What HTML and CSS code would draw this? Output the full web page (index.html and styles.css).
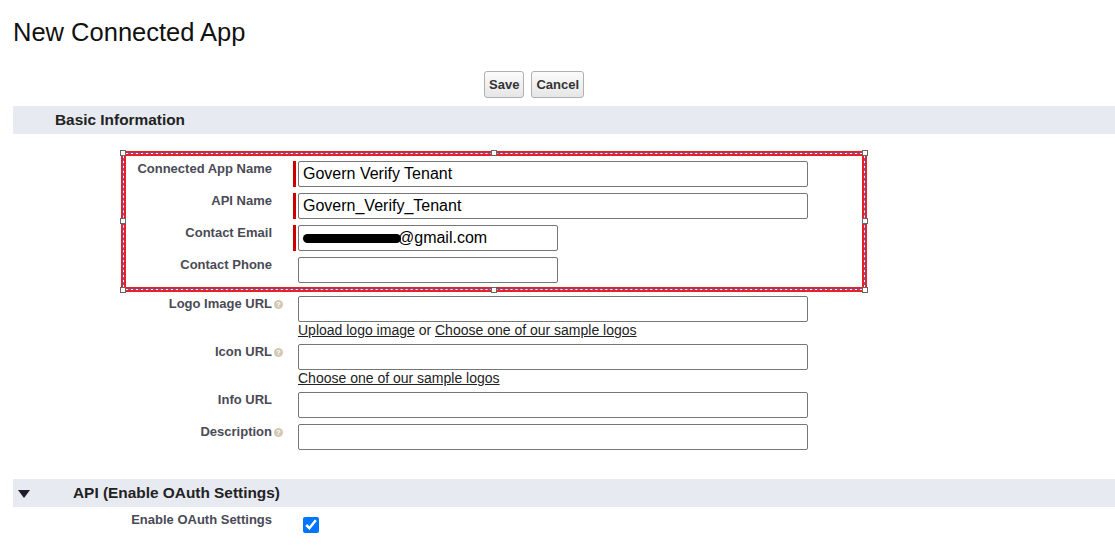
FILE: index.html
```html
<!DOCTYPE html>
<html lang="en">

<head>
    <meta charset="UTF-8">
    <meta name="viewport" content="width=device-width, initial-scale=1.0">
    <title>New Connected App</title>
    <link rel="stylesheet" href="styles.css">
</head>

<body>
    <main class="page">
        <h1 class="title">New Connected App</h1>

        <div class="buttons">
            <button class="btn">Save</button>
            <button class="btn">Cancel</button>
        </div>

        <div class="section-bar">
            <h2>Basic Information</h2>
        </div>

        <!-- highlighted block -->
        <div class="highlight">
            <span class="handle tl"></span>
            <span class="handle tm"></span>
            <span class="handle tr"></span>
            <span class="handle ml"></span>
            <span class="handle mr"></span>
            <span class="handle bl"></span>
            <span class="handle bm"></span>
            <span class="handle br"></span>

            <div class="row">
                <label class="label">Connected App Name</label>
                <span class="hint"></span>
                <div class="field req"><input class="input wide" type="text" value="Govern Verify Tenant"></div>
            </div>
            <div class="row">
                <label class="label">API Name</label>
                <span class="hint"></span>
                <div class="field req"><input class="input wide" type="text" value="Govern_Verify_Tenant"></div>
            </div>
            <div class="row">
                <label class="label">Contact Email</label>
                <span class="hint"></span>
                <div class="field req email">
                    <input class="input short email-input" type="text" value="@gmail.com">
                    <span class="redact"></span>
                </div>
            </div>
            <div class="row">
                <label class="label">Contact Phone</label>
                <span class="hint"></span>
                <div class="field"><input class="input short" type="text"></div>
            </div>
        </div>

        <div class="row">
            <label class="label">Logo Image URL</label>
            <span class="hint"><span class="help">?</span></span>
            <div class="field">
                <input class="input wide" type="text">
                <div class="links"><a href="#">Upload logo image</a> or <a href="#">Choose one of our sample logos</a></div>
            </div>
        </div>
        <div class="row">
            <label class="label">Icon URL</label>
            <span class="hint"><span class="help">?</span></span>
            <div class="field">
                <input class="input wide" type="text">
                <div class="links"><a href="#">Choose one of our sample logos</a></div>
            </div>
        </div>
        <div class="row">
            <label class="label">Info URL</label>
            <span class="hint"></span>
            <div class="field"><input class="input wide" type="text"></div>
        </div>
        <div class="row">
            <label class="label">Description</label>
            <span class="hint"><span class="help">?</span></span>
            <div class="field"><input class="input wide" type="text"></div>
        </div>

        <div class="section-bar api">
            <span class="twisty"></span>
            <h2>API (Enable OAuth Settings)</h2>
        </div>

        <div class="row check-row">
            <label class="label">Enable OAuth Settings</label>
            <span class="hint"></span>
            <div class="field"><input class="check" type="checkbox" checked></div>
        </div>
    </main>
</body>

</html>
```

FILE: styles.css
```css
* {
    margin: 0;
    padding: 0;
    box-sizing: border-box;
}

body {
    background: #fff;
    font-family: "Liberation Sans", Arial, sans-serif;
    color: #222;
}

.page {
    padding: 18px 0 0 13px;
}

.title {
    font-size: 25.5px;
    font-weight: normal;
    line-height: 29px;
    color: #111;
}

/* save / cancel */

.buttons {
    display: flex;
    gap: 7px;
    margin: 24px 0 8px 471px;
}

.btn {
    height: 27px;
    padding: 0 4px;
    font-family: inherit;
    font-size: 13px;
    font-weight: bold;
    color: #333;
    background: linear-gradient(#fbfbfb, #e6e6e6);
    border: 1px solid #b0b0b0;
    border-radius: 3px;
}

/* section headers */

.section-bar {
    display: flex;
    align-items: center;
    height: 28px;
    background: #e8eaf2;
    padding-left: 42px;
}

.section-bar h2 {
    font-size: 15.4px;
    font-weight: bold;
    line-height: 28px;
    color: #222;
}

.section-bar.api {
    margin-top: 29px;
    padding-left: 5px;
}

.twisty {
    width: 0;
    height: 0;
    margin: 1px 43px 0 0;
    border-left: 6.5px solid transparent;
    border-right: 6.5px solid transparent;
    border-top: 8px solid #1e1e2a;
}

/* form rows */

.row {
    display: flex;
    align-items: flex-start;
    margin-bottom: 6px;
}

.label {
    width: 259px;
    text-align: right;
    font-size: 13px;
    font-weight: bold;
    line-height: 15px;
    color: #4a4a56;
}

.hint {
    width: 21px;
    padding: 4px 0 0 2px;
}

.help {
    display: block;
    width: 9px;
    height: 9px;
    border-radius: 50%;
    background: #d3c8b4;
    color: #fff;
    font-size: 7px;
    font-weight: bold;
    line-height: 9px;
    text-align: center;
}

.field {
    padding-left: 5px;
}

.field.req {
    border-left: 3px solid #c00;
    padding-left: 2px;
    height: 26px;
}

.input {
    display: block;
    height: 26px;
    padding: 0 4px;
    font-family: inherit;
    font-size: 16px;
    color: #000;
    border: 1px solid #767676;
    border-radius: 2px;
    background: #fff;
}

.input.wide {
    width: 510px;
}

.input.short {
    width: 260px;
}

.links {
    font-size: 14px;
    line-height: 16px;
    color: #222;
}

.links a {
    color: #222;
}

/* email with blacked out name */

.field.email {
    position: relative;
}

.email-input {
    padding-left: 99px;
}

.redact {
    position: absolute;
    left: 7px;
    top: 9px;
    width: 98px;
    height: 9px;
    border-radius: 5px;
    background: #000;
}

/* red selection frame */

.highlight {
    position: relative;
    width: 742px;
    margin: 19px 0 6px 110px;
    padding-top: 7px;
    border: 1px dashed #3c6fd6;
    background: #fff;
    box-shadow: 0 0 0 2px #e8202a, inset 0 0 0 2px #e8202a;
}

.highlight .label {
    width: 148px;
}

.handle {
    position: absolute;
    width: 6px;
    height: 6px;
    background: #fff;
    border: 1px solid #666;
}

.handle.tl { left: -4px; top: -4px; }
.handle.tm { left: 367px; top: -4px; }
.handle.tr { right: -4px; top: -4px; }
.handle.ml { left: -4px; top: 64px; }
.handle.mr { right: -4px; top: 64px; }
.handle.bl { left: -4px; bottom: -4px; }
.handle.bm { left: 367px; bottom: -4px; }
.handle.br { right: -4px; bottom: -4px; }

/* oauth checkbox */

.check-row {
    margin-top: 5px;
}

.check {
    display: block;
    width: 16px;
    height: 16px;
    margin: 5px 0 0 5px;
    accent-color: #0075ff;
}
```
